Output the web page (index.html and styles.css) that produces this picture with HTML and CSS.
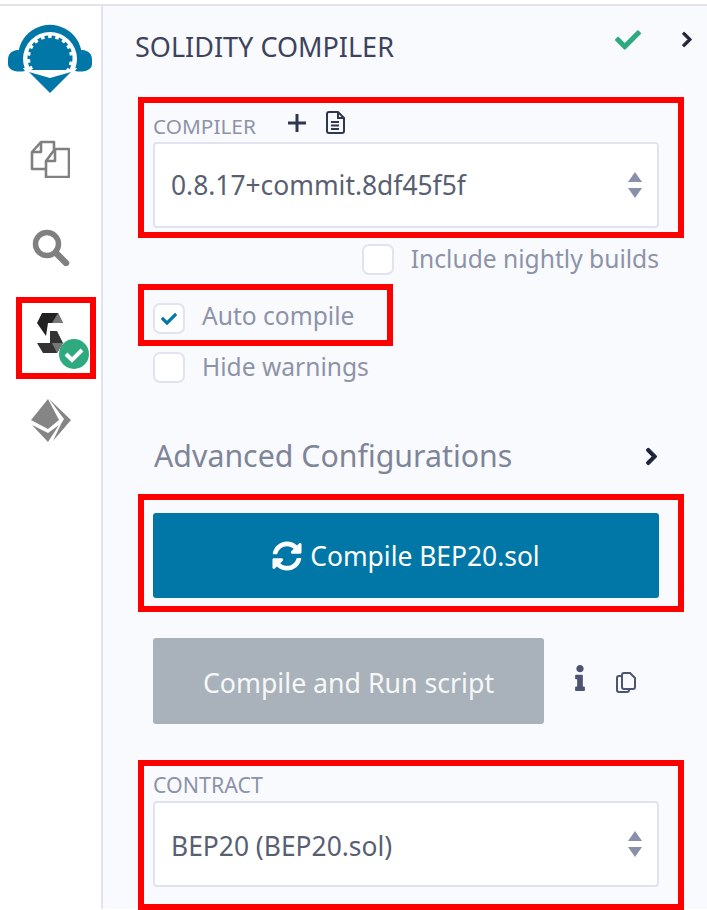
FILE: index.html
```html
<!DOCTYPE html>
<html lang="en">
<head>
    <meta charset="UTF-8">
    <meta name="viewport" content="width=device-width, initial-scale=1.0">
    <title>Solidity Compiler</title>
    <link rel="stylesheet" href="styles.css">
</head>
<body>
    <svg class="sprites" width="0" height="0">
        <symbol id="chevron" viewBox="0 0 320 512">
            <path d="M285.476 272.971L91.132 467.314c-9.373 9.373-24.569 9.373-33.941 0l-22.667-22.667c-9.357-9.357-9.375-24.522-.04-33.901L188.505 256 34.484 101.255c-9.335-9.379-9.317-24.544.04-33.901l22.667-22.667c9.373-9.373 24.569-9.373 33.941 0L285.475 239.03c9.373 9.372 9.373 24.568.001 33.941z"/>
        </symbol>
        <symbol id="updown" viewBox="0 0 14 26">
            <path d="M7 0l7 10H0zM0 16h14L7 26z"/>
        </symbol>
        <symbol id="check" viewBox="0 0 512 512">
            <path d="M173.898 439.404l-166.4-166.4c-9.997-9.997-9.997-26.206 0-36.204l36.203-36.204c9.997-9.998 26.207-9.998 36.204 0L192 312.69 432.095 72.596c9.997-9.997 26.207-9.997 36.204 0l36.203 36.204c9.997 9.997 9.997 26.206 0 36.204l-294.4 294.401c-9.998 9.997-26.207 9.997-36.204-.001z"/>
        </symbol>
        <clipPath id="shell-clip">
            <rect x="0" y="0" width="84" height="46"/>
        </clipPath>
    </svg>

    <div class="app">
        <nav class="sidebar">
            <svg class="nav-logo" width="84" height="70" viewBox="0 0 84 70" fill="#0077a6">
                <path d="M9 26C3 27 0 30 0 36v4c0 6 8 9 17 7-5-7-7-14-6-21zM75 26c6 1 9 4 9 10v4c0 6-8 9-17 7 5-7 7-14 6-21z"/>
                <path d="M12 44A32 32 0 1 1 72 44z"/>
                <circle cx="42" cy="35" r="27" fill="#fff"/>
                <circle cx="42" cy="34" r="20" stroke="#0077a6" stroke-width="5" stroke-dasharray="3.500 3.300" clip-path="url(#shell-clip)"/>
                <path d="M21 48l21 6 21-6-21 21z"/>
            </svg>
            <svg class="nav-files" width="40" height="38" viewBox="0 0 40 38" fill="none" stroke="#808080" stroke-width="2.6" stroke-linejoin="round">
                <path d="M15 29H2V12L11 2h13v8"/>
                <path d="M2 12h9V2"/>
                <path d="M16 21L25 9h14v28H16z" fill="#fff"/>
                <path d="M16 21h9V9"/>
            </svg>
            <svg class="nav-search" width="38" height="37" viewBox="0 0 38 37" fill="none" stroke="#808080">
                <circle cx="15" cy="15" r="11.5" stroke-width="5.5"/>
                <path d="M24 24l10 10" stroke-width="6.5" stroke-linecap="round"/>
            </svg>
            <div class="nav-active">
                <svg width="68" height="70" viewBox="0 0 68 70">
                    <path d="M20 10h16l5 10H26l-2 13-9-13z" fill="#222"/>
                    <path d="M36 10l5 10H30z" fill="#777"/>
                    <path d="M28 28h7l6 12-6 10H21l-6-10h13z" fill="#333"/>
                    <path d="M35 50l6-10H30z" fill="#777"/>
                    <circle cx="52" cy="51" r="15" fill="#2eaa7e"/>
                    <path d="M44 51l6 6 10-10" fill="none" stroke="#fff" stroke-width="4"/>
                </svg>
            </div>
            <svg class="nav-deploy" width="42" height="43" viewBox="0 0 42 43" fill="#858585">
                <path d="M18 0L1 21l17 9 11-9z"/>
                <path d="M19 0l22 21-18 21 8-17 3-5z"/>
                <path d="M2 26l16 8 11-8-11 17z"/>
            </svg>
        </nav>

        <main class="panel">
            <header class="panel-head">
                <h1 class="panel-title">SOLIDITY COMPILER</h1>
                <svg class="head-check"><use href="#check"/></svg>
                <svg class="head-chevron"><use href="#chevron"/></svg>
            </header>

            <section class="marked field">
                <div class="field-label">
                    <span>COMPILER</span>
                    <svg class="label-plus" viewBox="0 0 18 18"><path d="M7.5 0h3v7.500h7.500v3h-7.500v7.500h-3v-7.500H0v-3h7.500z"/></svg>
                    <svg class="label-file" viewBox="0 0 20 24" fill="none" stroke="#30364f" stroke-width="2">
                        <path d="M2 4a2 2 0 0 1 2-2h9l6 6v13a2 2 0 0 1-2 2H4a2 2 0 0 1-2-2z"/>
                        <path d="M13 2v6h6M6 12h8M6 15.500h8M6 19h8"/>
                    </svg>
                </div>
                <div class="select">
                    <span>0.8.17+commit.8df45f5f</span>
                    <svg class="select-arrows"><use href="#updown"/></svg>
                </div>
            </section>

            <div class="option option-right">
                <span class="box"></span>
                <span>Include nightly builds</span>
            </div>

            <div class="marked option-marked">
                <div class="option">
                    <span class="box"><svg class="box-check"><use href="#check"/></svg></span>
                    <span>Auto compile</span>
                </div>
            </div>

            <div class="option option-hide">
                <span class="box"></span>
                <span>Hide warnings</span>
            </div>

            <div class="advanced">
                <span>Advanced Configurations</span>
                <svg class="advanced-chevron"><use href="#chevron"/></svg>
            </div>

            <div class="marked compile">
                <button class="btn btn-compile">
                    <svg class="btn-sync" viewBox="0 0 512 512"><path d="M370.72 133.28C339.458 104.008 298.888 87.962 255.848 88c-77.458.068-144.328 53.178-162.791 126.85-1.344 5.363-6.122 9.15-11.651 9.15H24.103c-7.498 0-13.194-6.807-11.807-14.176C33.933 94.924 134.813 8 256 8c66.448 0 126.791 26.136 171.315 68.685L463.03 40.97C478.149 25.851 504 36.559 504 57.941V192c0 13.255-10.745 24-24 24H345.941c-21.382 0-32.09-25.851-16.971-40.971l41.75-41.749zM32 296h134.059c21.382 0 32.09 25.851 16.971 40.971l-41.75 41.75c31.262 29.273 71.835 45.319 114.876 45.28 77.418-.07 144.315-53.144 162.787-126.849 1.344-5.363 6.122-9.15 11.651-9.15h57.304c7.498 0 13.194 6.807 11.807 14.176C478.067 417.076 377.187 504 256 504c-66.448 0-126.791-26.136-171.315-68.685L48.97 471.03C33.851 486.149 8 475.441 8 454.059V320c0-13.255 10.745-24 24-24z"/></svg>
                    Compile BEP20.sol
                </button>
            </div>

            <div class="script-row">
                <button class="btn btn-script">Compile and Run script</button>
                <svg class="script-info" viewBox="0 0 192 512"><path d="M20 424.229h20V279.771H20c-11.046 0-20-8.954-20-20V212c0-11.046 8.954-20 20-20h112c11.046 0 20 8.954 20 20v212.229h20c11.046 0 20 8.954 20 20V492c0 11.046-8.954 20-20 20H20c-11.046 0-20-8.954-20-20v-47.771c0-11.046 8.954-20 20-20zM96 0C56.235 0 24 32.235 24 72s32.235 72 72 72 72-32.235 72-72S135.764 0 96 0z"/></svg>
                <svg class="script-copy" viewBox="0 0 20 22" fill="none" stroke="#4d5470" stroke-width="2">
                    <path d="M6 4H3a2 2 0 0 0-2 2v12a2 2 0 0 0 2 2h8a2 2 0 0 0 2-2v-1"/>
                    <path d="M6 3a2 2 0 0 1 2-2h6l5 5v9a2 2 0 0 1-2 2H8a2 2 0 0 1-2-2z"/>
                </svg>
            </div>

            <section class="marked field field-contract">
                <div class="field-label field-label-contract">
                    <span>CONTRACT</span>
                </div>
                <div class="select">
                    <span>BEP20 (BEP20.sol)</span>
                    <svg class="select-arrows"><use href="#updown"/></svg>
                </div>
            </section>
        </main>
    </div>
</body>
</html>
```

FILE: styles.css
```css
html, body {
    height: 910px;
    margin: 0;
    overflow: hidden;
    background-color: #fff;
}

body {
    font-family: "Noto Sans", "Open Sans", sans-serif;
    color: #8d93a8;
}

.sprites {
    display: block;
    height: 0;
}

.app {
    display: flex;
    height: 903px;
    margin-top: 4px;
    border-top: 2px solid #e3e4ea;
}

/* left icon bar */
.sidebar {
    display: flex;
    flex-direction: column;
    flex-shrink: 0;
    align-items: flex-start;
    width: 101px;
    border-right: 2px solid #e1e3f0;
    box-sizing: content-box;
}

.sidebar svg {
    display: block;
}

.nav-logo {
    margin: 18px 0 0 8px;
}

.nav-files {
    margin: 46px 0 0 30px;
}

.nav-search {
    margin: 51px 0 0 32px;
}

.nav-active {
    width: 68px;
    height: 70px;
    margin: 31px 0 0 16px;
    border: 6px solid #f00;
}

.nav-deploy {
    margin: 20px 0 0 30px;
}

/* compiler panel */
.panel {
    flex: 1;
    min-width: 0;
    padding-left: 35px;
    background-color: #f9fafe;
}

.panel-head {
    display: flex;
    align-items: flex-start;
    height: 91px;
    margin-left: -3px;
    padding-right: 14px;
}

.panel-title {
    margin: 24px auto 0 0;
    font-size: 27px;
    font-weight: 400;
    line-height: 34px;
    color: #3d435c;
}

.head-check {
    width: 26px;
    height: 26px;
    margin: 21px 0 0;
    fill: #2eaa7e;
}

.head-chevron {
    width: 12px;
    height: 17px;
    margin: 25px 0 0 40px;
    fill: #1f2438;
    stroke: #1f2438;
    stroke-width: 30;
}

.marked {
    border: 6px solid #f00;
    box-sizing: border-box;
}

.field {
    width: 546px;
    height: 141px;
    padding-left: 9px;
}

.field-label {
    display: flex;
    align-items: center;
    height: 39px;
    font-size: 20.8px;
}

.field-label span {
    padding-top: 6px;
}

.label-plus {
    width: 18px;
    height: 18px;
    margin: 0 0 0 32px;
    fill: #30364f;
}

.label-file {
    width: 20px;
    height: 24px;
    margin: -2px 0 0 19px;
}

.select {
    display: flex;
    align-items: center;
    justify-content: space-between;
    box-sizing: border-box;
    width: 506px;
    height: 86px;
    padding: 0 15px 0 16px;
    border: 2px solid #e1e3f0;
    border-radius: 4px;
    background-color: #fff;
    font-size: 26.4px;
    color: #595f72;
}

.select-arrows {
    width: 14px;
    height: 26px;
    fill: #8a90aa;
}

.option {
    display: flex;
    align-items: center;
    gap: 17px;
    height: 31px;
    font-size: 24.6px;
}

.option span:last-child {
    padding-bottom: 3px;
}

.option-right {
    justify-content: flex-end;
    width: 521px;
    margin-top: 6px;
}

.option-marked {
    width: 255px;
    height: 62px;
    margin-top: 9px;
    padding: 13px 0 0 9px;
}

.option-marked .option span:last-child {
    padding-bottom: 7px;
}

.option-hide {
    margin: 6px 0 0 15px;
}

.option .box {
    display: flex;
    align-items: center;
    justify-content: center;
    box-sizing: border-box;
    width: 32px;
    height: 31px;
    padding: 0;
    border: 2px solid #e1e3f0;
    border-radius: 7px;
    background-color: #fff;
}

.box-check {
    width: 16px;
    height: 16px;
    fill: #0077a6;
}

.advanced {
    display: flex;
    align-items: center;
    justify-content: space-between;
    width: 504px;
    height: 40px;
    margin: 53px 0 0 16px;
    font-size: 30.3px;
    color: #7f8598;
}

.advanced span {
    padding-bottom: 2px;
}

.advanced-chevron {
    width: 13px;
    height: 19px;
    fill: #1f2438;
    stroke: #1f2438;
    stroke-width: 30;
}

.compile {
    width: 546px;
    height: 118px;
    margin-top: 18px;
    padding: 13px 0 0 9px;
}

.btn {
    display: flex;
    align-items: center;
    justify-content: center;
    box-sizing: border-box;
    height: 85px;
    border: 0;
    border-radius: 3px;
    font-family: inherit;
    font-size: 26.4px;
    color: #fff;
}

.btn-compile {
    gap: 8px;
    width: 506px;
    background-color: #0077a6;
}

.btn-sync {
    width: 30px;
    height: 30px;
    fill: #fff;
}

.script-row {
    display: flex;
    align-items: center;
    height: 86px;
    margin: 26px 0 0 15px;
}

.btn-script {
    width: 391px;
    height: 86px;
    padding-top: 3px;
    background-color: #a9b2ba;
    font-size: 26.7px;
    color: #f6f8f8;
}

.script-info {
    width: 10px;
    height: 26px;
    margin: -6px 0 0 31px;
    fill: #4d5470;
}

.script-copy {
    width: 20px;
    height: 22px;
    margin: 4px 0 0 31px;
}

.field-contract {
    height: 150px;
    margin-top: 36px;
}

.field-contract .select span {
    padding-top: 3px;
}

.field-label-contract {
    height: 35px;
    font-size: 21.4px;
}

.field-label-contract span {
    padding-top: 2px;
}
```
